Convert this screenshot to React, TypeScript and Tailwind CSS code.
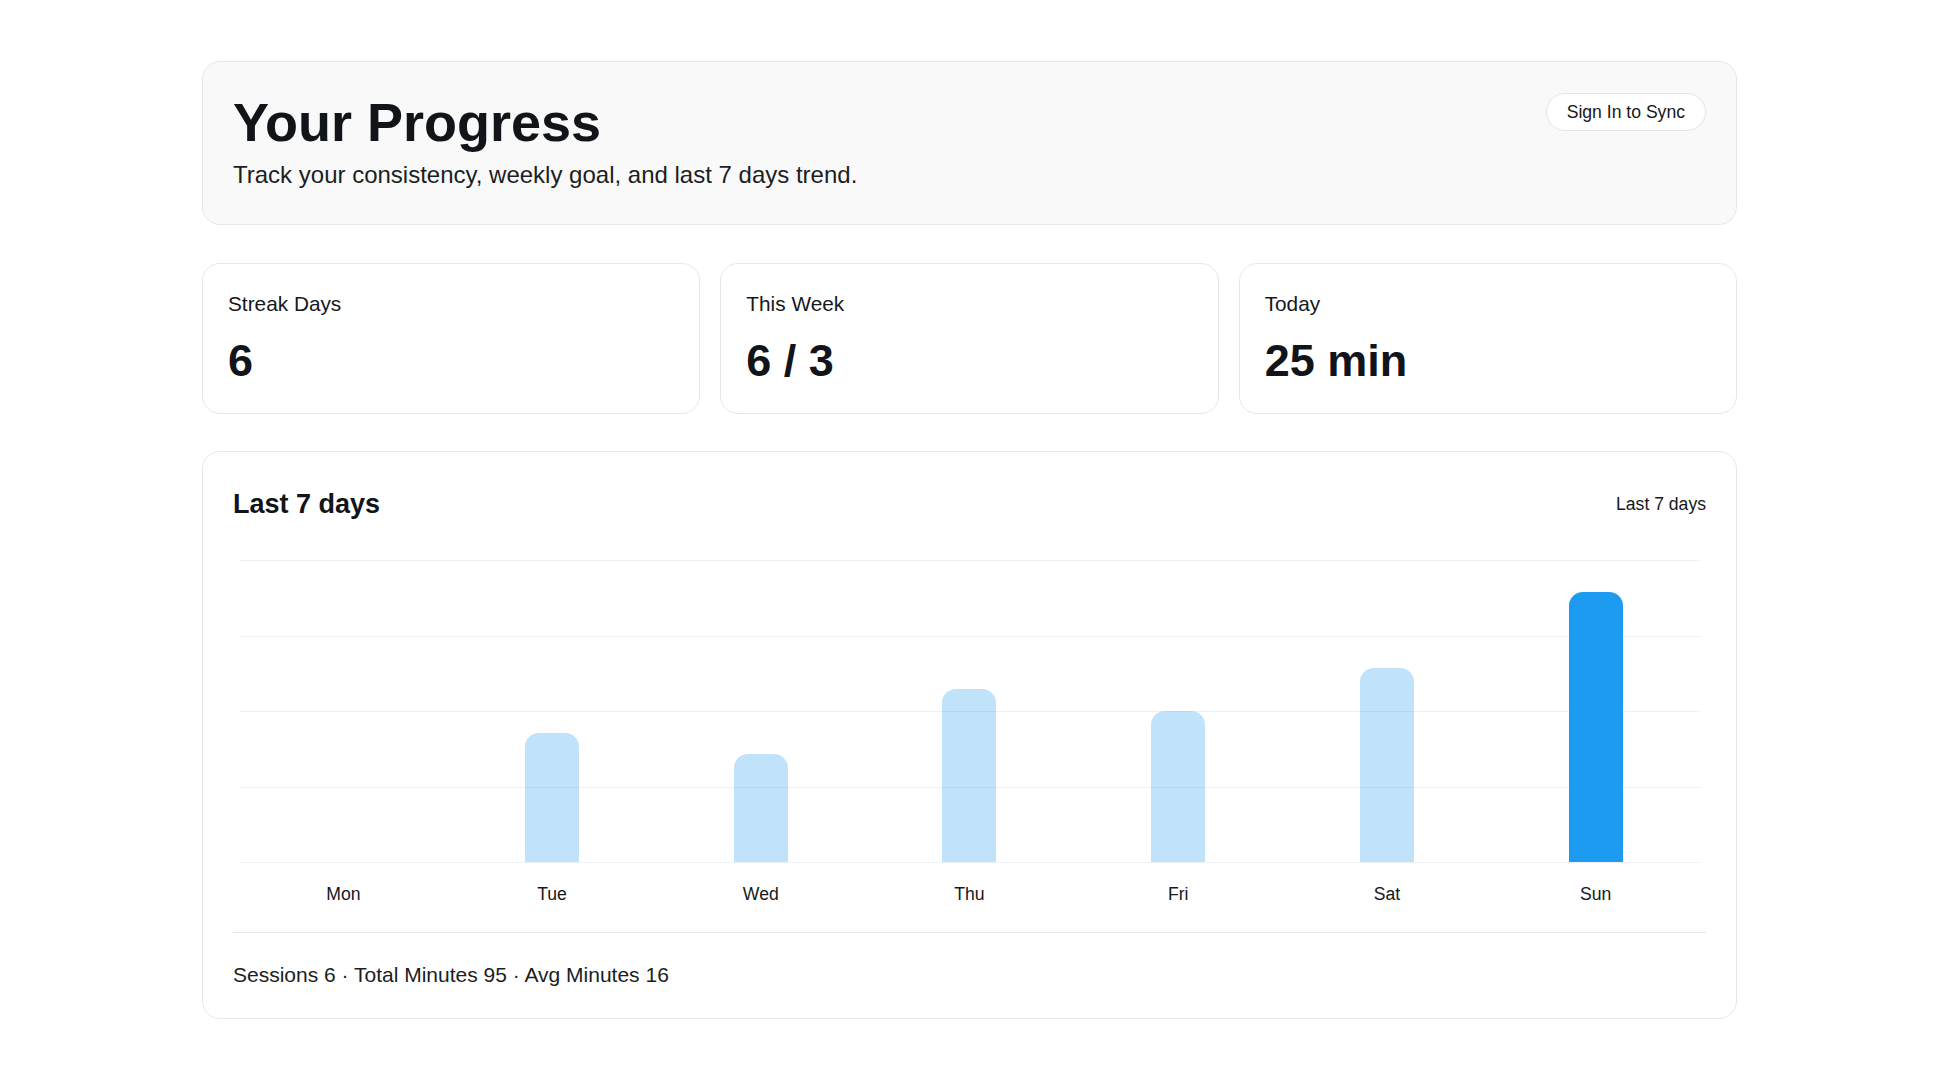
import { useMemo } from "react";

type DayStat = { day: string; minutes: number };

const WEEK: DayStat[] = [
    { day: "Mon", minutes: 0 },
    { day: "Tue", minutes: 12 },
    { day: "Wed", minutes: 10 },
    { day: "Thu", minutes: 16 },
    { day: "Fri", minutes: 14 },
    { day: "Sat", minutes: 18 },
    { day: "Sun", minutes: 25 },
];

const CHART_MAX = 28;
const CHART_HEIGHT = 302;

function StatCard({ label, value }: { label: string; value: string }) {
    return (
        <div className="rounded-[18px] border border-[#e5e8eb] bg-white px-[25px] pt-[25px] pb-[26px]">
            <div className="text-[20.8px] leading-[30px] text-[#16181c]">{label}</div>
            <div className="mt-[16px] text-[45px] font-bold leading-[52px] text-[#111418]">{value}</div>
        </div>
    );
}

export default function App() {
    const sessions = WEEK.filter((d) => d.minutes > 0).length;
    const total = useMemo(() => WEEK.reduce((s, d) => s + d.minutes, 0), []);
    const avg = Math.round(total / sessions);

    return (
        <div className="min-h-screen bg-white [font-family:'Liberation_Sans',Arial,sans-serif] text-[#16181c]">
            <div className="ml-[202px] w-[1535px] pt-[61px] pb-[60px]">
                {/* header */}
                <div className="flex items-start justify-between rounded-[18px] border border-[#e5e8eb] bg-[#f9f9f9] px-[30px] pt-[31px] pb-[33px]">
                    <div>
                        <h1 className="text-[54px] font-bold leading-[58px] text-[#111418]">Your Progress</h1>
                        <p className="mt-[7px] text-[24px] leading-[33px] text-[#1b1e22]">
                            Track your consistency, weekly goal, and last 7 days trend.
                        </p>
                    </div>
                    <button className="h-[38px] rounded-full border border-[#e3e6e9] bg-white px-[20px] text-[17.6px] text-[#16181c]">
                        Sign In to Sync
                    </button>
                </div>

                {/* stats */}
                <div className="mt-[38px] grid grid-cols-3 gap-5">
                    <StatCard label="Streak Days" value="6" />
                    <StatCard label="This Week" value="6 / 3" />
                    <StatCard label="Today" value="25 min" />
                </div>

                {/* chart */}
                <div className="mt-[37px] rounded-[18px] border border-[#e5e8eb] bg-white px-[30px] pt-[30px] pb-[28px]">
                    <div className="flex items-center justify-between">
                        <h2 className="text-[27px] font-bold leading-[44px] text-[#111418]">Last 7 days</h2>
                        <span className="text-[17.6px] leading-[26px] text-[#16181c]">Last 7 days</span>
                    </div>

                    <div className="mx-[6px] mt-[34px]">
                        <div className="relative h-[303px]">
                            <div className="absolute inset-0 flex flex-col justify-between">
                                {[0, 1, 2, 3, 4].map((i) => (
                                    <div key={i} className="h-px bg-[#eef1f3]" />
                                ))}
                            </div>
                            <div className="relative grid h-[302px] grid-cols-7 items-end">
                                {WEEK.map((d, i) => (
                                    <div key={d.day} className="flex justify-center">
                                        {d.minutes > 0 && (
                                            <div
                                                className={
                                                    i === WEEK.length - 1
                                                        ? "w-[54px] rounded-t-[14px] bg-[#1d9bf0]"
                                                        : "w-[54px] rounded-t-[14px] bg-[#1d9bf0]/[0.28]"
                                                }
                                                style={{ height: (d.minutes / CHART_MAX) * CHART_HEIGHT }}
                                            />
                                        )}
                                    </div>
                                ))}
                            </div>
                        </div>
                        <div className="mt-[18px] grid grid-cols-7 text-center text-[17.6px] leading-[26px] text-[#16181c]">
                            {WEEK.map((d) => (
                                <span key={d.day}>{d.day}</span>
                            ))}
                        </div>
                    </div>

                    <div className="mt-[25px] border-t border-[#e5e8eb] pt-[26px] text-[21px] leading-[31px] text-[#1b1e22]">
                        Sessions {sessions} · Total Minutes {total} · Avg Minutes {avg}
                    </div>
                </div>
            </div>
        </div>
    );
}
